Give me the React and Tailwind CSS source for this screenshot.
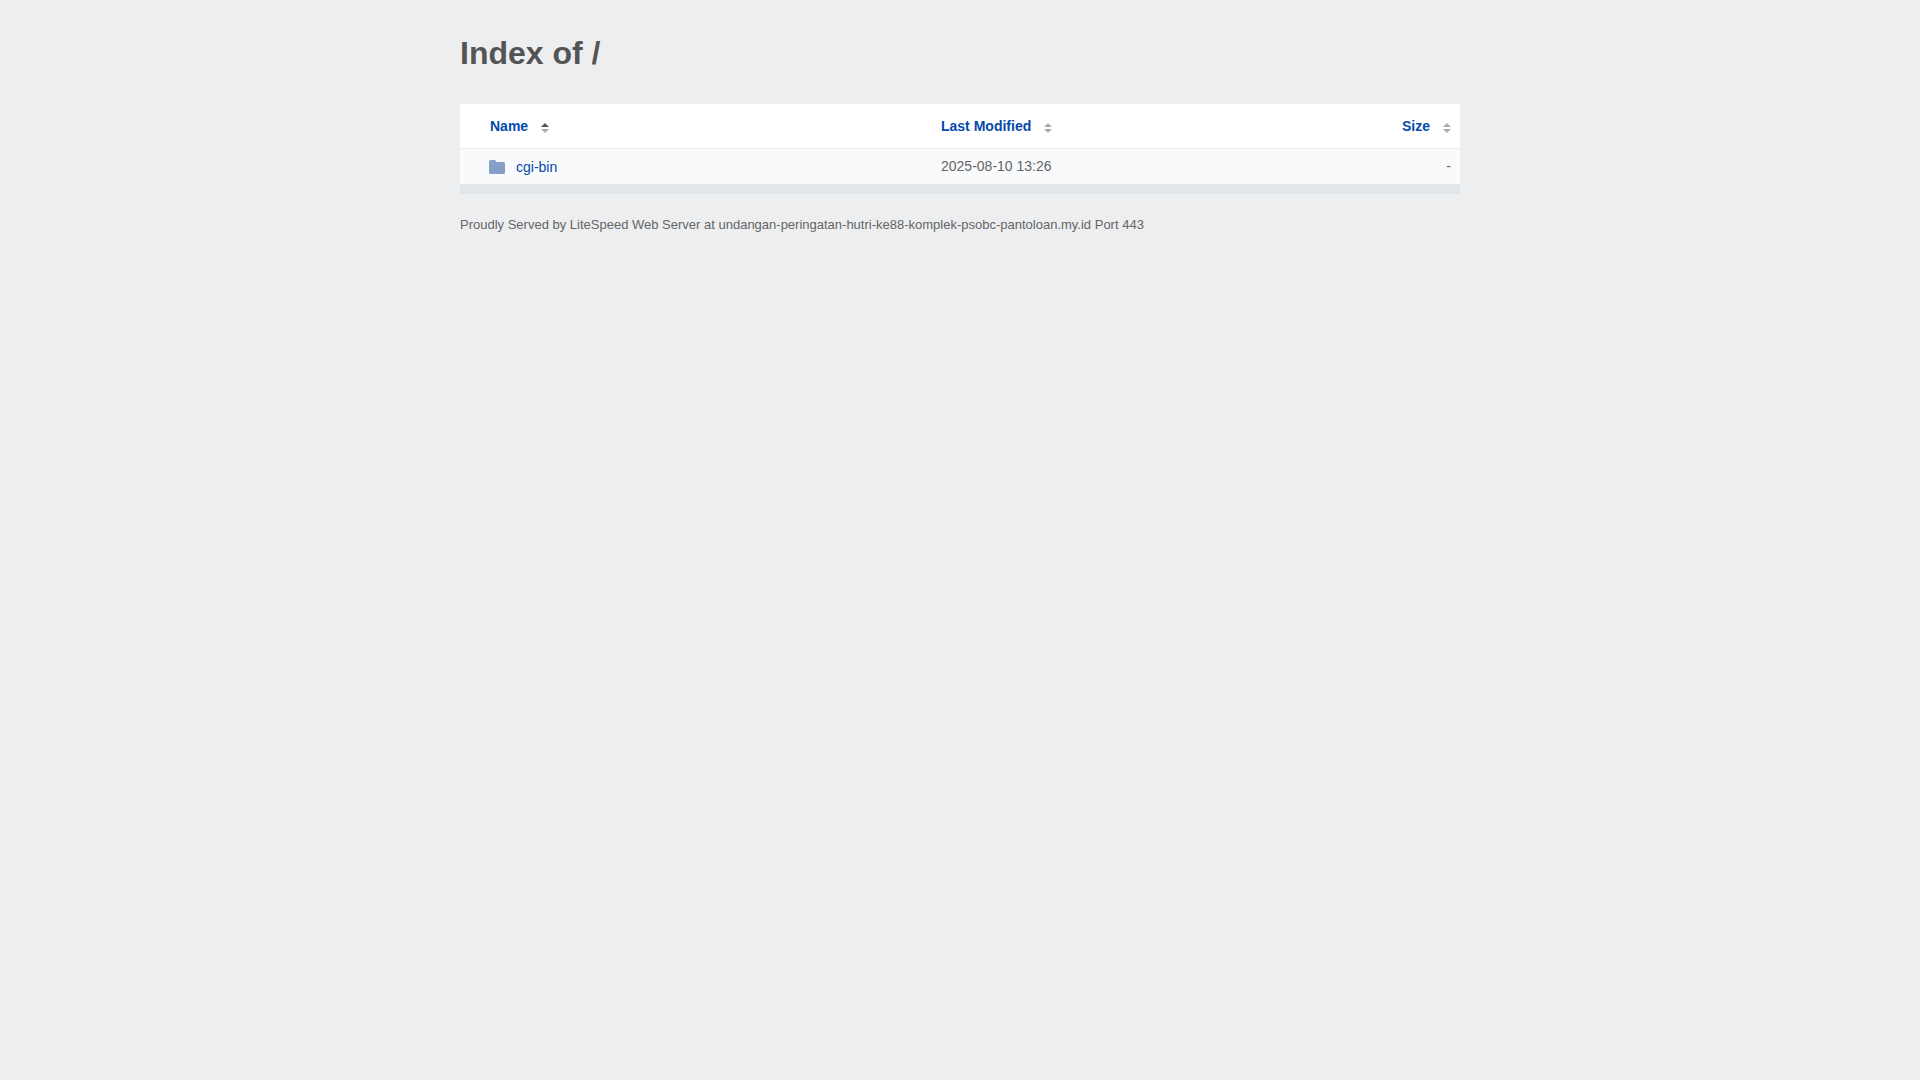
const columns = [
  { id: "name", label: "Name", sorted: true, className: "pl-[30px]" },
  { id: "modified", label: "Last Modified", sorted: false, className: "px-[9px]" },
  { id: "size", label: "Size", sorted: false, className: "pr-[9px]" },
];

const files = [{ id: 1, name: "cgi-bin", modified: "2025-08-10 13:26", size: "-" }];

function SortIcon({ sorted }) {
  return (
    <svg viewBox="0 0 8 10" className="w-2 h-[10px] mt-[3px]" aria-hidden="true">
      <path d="M0 4L4 0L8 4Z" fill={sorted ? "#555" : "#aaa"} />
      <path d="M0 6L4 10L8 6Z" fill="#aaa" />
    </svg>
  );
}

function FolderIcon() {
  return (
    <svg viewBox="0 0 16 14" className="w-4 h-[14px]" aria-hidden="true">
      <path
        d="M1.5 0H5.5Q6 0 6.4 .5L7.5 2H14.5Q16 2 16 3.5V12.5Q16 14 14.5 14H1.5Q0 14 0 12.5V1.5Q0 0 1.5 0Z"
        fill="#869fc6"
      />
    </svg>
  );
}

export default function App() {
  return (
    <div className="min-h-screen bg-[#edeef0] px-5 font-['Liberation_Sans',Arial,sans-serif] text-sm text-[#656565]">
      <main className="mx-auto max-w-[1000px] pt-8">
        <h1 className="text-[32px] leading-[42px] font-bold text-[#545454]">Index of /</h1>
        <div className="mt-[30px] border-b-[10px] border-[#e2e6e9]">
          <table className="w-full border-separate border-spacing-0 bg-white">
            <thead>
              <tr className="h-[45px]">
                {columns.map((column) => (
                  <th key={column.id} className={`border-b border-[#e9ebec] ${column.className}`}>
                    <button
                      className={`flex items-center gap-[13px] font-bold text-[#0549ab] cursor-pointer ${
                        column.id === "size" ? "ml-auto" : ""
                      }`}
                    >
                      {column.label}
                      <SortIcon sorted={column.sorted} />
                    </button>
                  </th>
                ))}
              </tr>
            </thead>
            <tbody>
              {files.map((file) => (
                <tr key={file.id} className="h-[35px] bg-[#f8fafc]">
                  <td className="w-[472px] pl-[29px] pt-px">
                    <a href="#" className="flex items-center gap-[11px] text-[#0549ab]">
                      <FolderIcon />
                      {file.name}
                    </a>
                  </td>
                  <td className="px-[9px] pb-px">{file.modified}</td>
                  <td className="pr-[9px] pb-px text-right">{file.size}</td>
                </tr>
              ))}
            </tbody>
          </table>
        </div>
        <footer className="mt-[21px] text-[13px] leading-5">
          Proudly Served by LiteSpeed Web Server at undangan-peringatan-hutri-ke88-komplek-psobc-pantoloan.my.id Port 443
        </footer>
      </main>
    </div>
  );
}
